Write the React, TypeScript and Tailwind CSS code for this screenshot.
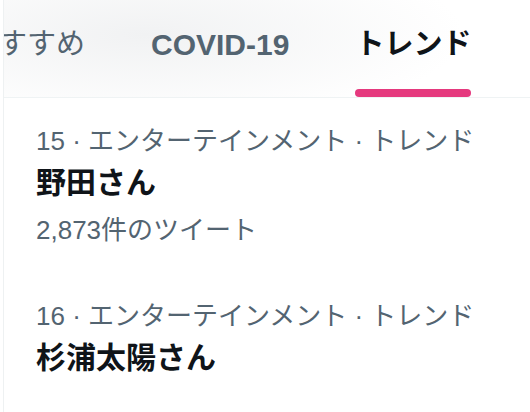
import React from "react";

const FONT = "font-['Liberation_Sans','Noto_Sans_CJK_JP',sans-serif]";

function Trend({ meta, title, count }: { meta: string; title: string; count?: string }) {
  return (
    <div className="px-[32px] pt-[27px] pb-[27px]">
      <div className="text-[26px] leading-[32px] text-[#536471] whitespace-nowrap">{meta}</div>
      <div className="text-[30px] leading-[40px] font-bold text-[#0f1419] mt-[6px]">{title}</div>
      {count && <div className="text-[26px] leading-[32px] text-[#536471] mt-[11px]">{count}</div>}
    </div>
  );
}

export default function App() {
  return (
    <div className={"w-[530px] h-[412px] overflow-hidden bg-white pl-[3px] " + FONT}>
      <div className="h-full border-l border-[#eef1f2] overflow-hidden">
        <div className="h-[98px] border-b border-[#eff3f4] bg-[radial-gradient(ellipse_320px_90px_at_140px_35px,#f1f2f3_0%,#ffffff_100%)] overflow-hidden">
          <div className="flex h-[97px] ml-[-68px]">
            <div className="mx-[33px] flex flex-col h-full shrink-0">
              <div className="flex-1 flex items-center text-[29px] text-[#536471] whitespace-nowrap">おすすめ</div>
              <div className="h-[8px]" />
            </div>
            <div className="mx-[33px] flex flex-col h-full shrink-0">
              <div className="flex-1 flex items-center text-[30px] font-bold text-[#536471] whitespace-nowrap">COVID-19</div>
              <div className="h-[8px]" />
            </div>
            <div className="mx-[33px] flex flex-col h-full shrink-0">
              <div className="flex-1 flex items-center text-[29px] font-bold text-[#0f1419] whitespace-nowrap">トレンド</div>
              <div className="h-[8px] w-full rounded-full bg-[#e5397e]" />
            </div>
          </div>
        </div>
        <Trend meta="15 · エンターテインメント · トレンド" title="野田さん" count="2,873件のツイート" />
        <Trend meta="16 · エンターテインメント · トレンド" title="杉浦太陽さん" />
      </div>
    </div>
  );
}
